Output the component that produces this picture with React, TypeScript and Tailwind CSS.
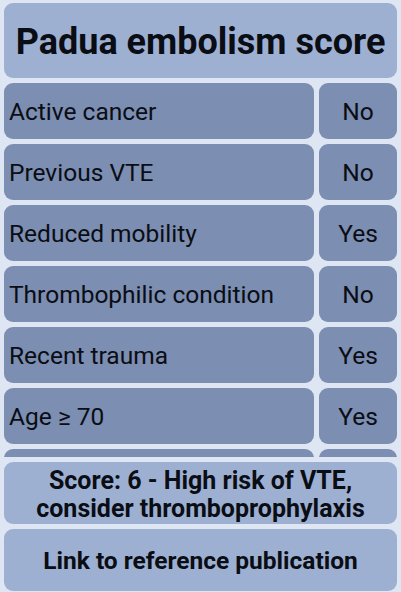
const rows = [
  { label: "Active cancer", value: "No" },
  { label: "Previous VTE", value: "No" },
  { label: "Reduced mobility", value: "Yes" },
  { label: "Thrombophilic condition", value: "No" },
  { label: "Recent trauma", value: "Yes" },
  { label: "Age ≥ 70", value: "Yes" },
  { label: "Heart and/or respiratory failure", value: "No" },
];

function Row({ label, value }: { label: string; value: string }) {
  return (
    <div className="flex gap-[5px] h-[56px] shrink-0">
      <div className="flex-1 flex items-center pl-[5px] pt-[3px] rounded-[9px] bg-[#7c8eb1] text-[24.5px] text-[#0a0d14] whitespace-nowrap overflow-hidden">
        {label}
      </div>
      <div className="w-[78px] flex items-center justify-center pt-[3px] rounded-[9px] bg-[#7c8eb1] text-[24.5px] text-[#0a0d14]">
        {value}
      </div>
    </div>
  );
}

export default function App() {
  return (
    <div
      className="h-[592px] flex flex-col gap-[5px] px-[4px] pt-[3px] pb-[1px] bg-[#dfe6f3]"
      style={{ fontFamily: "Roboto, 'Noto Sans', sans-serif" }}
    >
      <div className="h-[75px] shrink-0 flex items-center justify-center pt-[2px] rounded-[9px] bg-[#9db0d2]">
        <h1 className="text-[36px] font-bold text-[#0a0d14] whitespace-nowrap">Padua embolism score</h1>
      </div>

      <div className="flex-1 flex flex-col gap-[5px] overflow-hidden">
        {rows.map((r) => (
          <Row key={r.label} label={r.label} value={r.value} />
        ))}
      </div>

      <div className="h-[62px] shrink-0 flex flex-col items-center justify-center pt-[4px] rounded-[9px] bg-[#9db0d2] text-center text-[25px] leading-[28px] font-bold text-[#0a0d14] whitespace-nowrap">
        <span>Score: 6 - High risk of VTE,</span>
        <span>consider thromboprophylaxis</span>
      </div>

      <div className="h-[62px] shrink-0 flex items-center justify-center pt-[3px] rounded-[9px] bg-[#9db0d2] text-[24.5px] font-bold text-[#0a0d14] whitespace-nowrap">
        Link to reference publication
      </div>
    </div>
  );
}
